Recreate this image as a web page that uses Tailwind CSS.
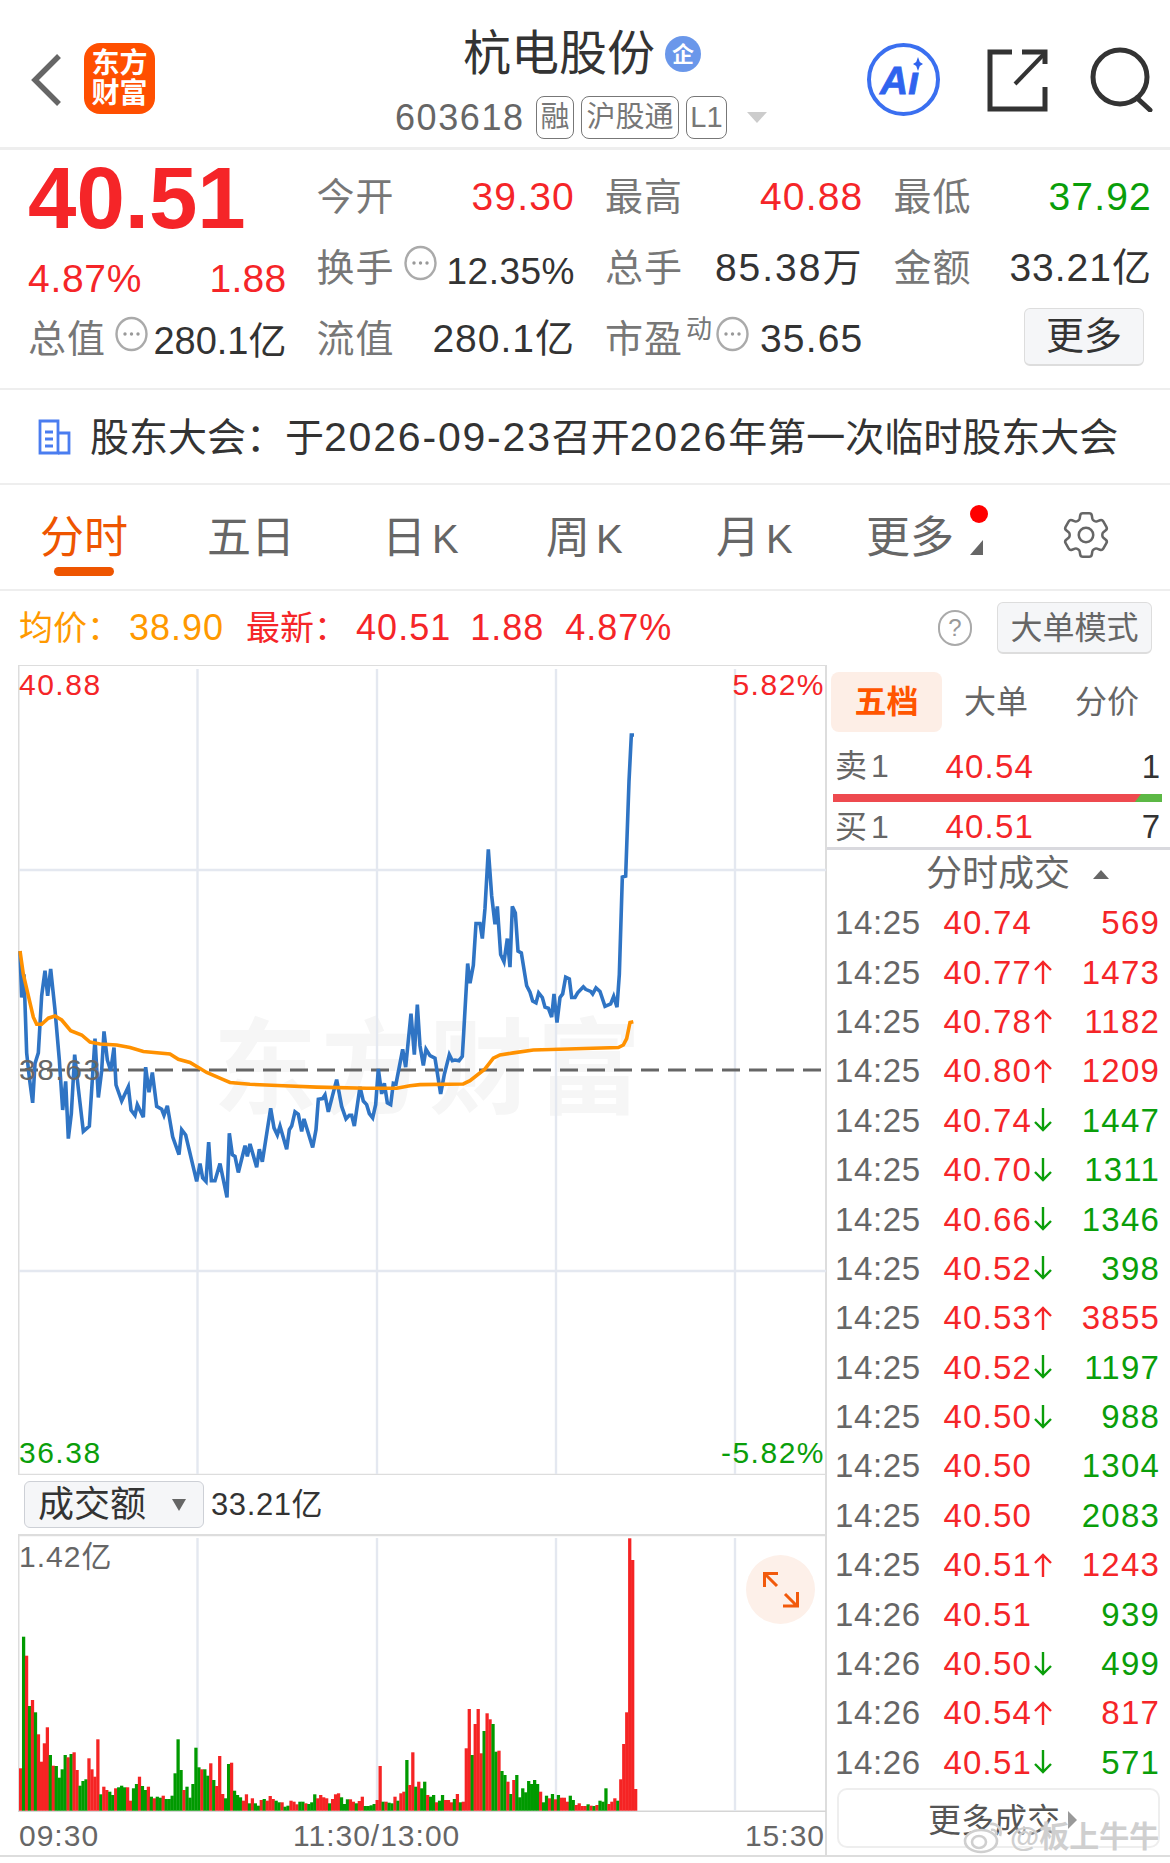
<!DOCTYPE html>
<html lang="zh-CN">
<head>
    <meta charset="UTF-8">
    <title>杭电股份</title>
    <script src="https://cdn.jsdelivr.net/npm/@tailwindcss/browser@4"></script>
</head>
<body class="bg-white w-[1170px] h-[1863px] overflow-hidden relative font-['Liberation_Sans','Noto_Sans_CJK_SC',sans-serif] text-[#333]">

    <!-- Header -->
    <header class="h-[150px] border-b-[3px] border-[#eeeeee] relative flex">
        <div class="w-[84px] pl-[31px] pt-[54px] shrink-0">
            <svg width="32" height="52" viewBox="0 0 32 52" fill="none" stroke="#666" stroke-width="5.5"><path d="M28 2 L4 26 L28 50"/></svg>
        </div>
        <div class="mt-[43px] w-[71px] h-[71px] rounded-[16px] bg-[#ff4f00] text-white font-bold text-[28px] leading-[30px] flex flex-col items-center justify-center shrink-0">
            <span>东方</span><span>财富</span>
        </div>
        <div class="absolute left-[395px] top-[27px] flex flex-col">
            <div class="flex items-center pl-[68px] h-[54px]">
                <span class="text-[48px] leading-none">杭电股份</span>
                <span class="ml-[10px] w-[36px] h-[36px] rounded-full bg-[#6a97ea] text-white text-[22px] font-bold flex items-center justify-center">企</span>
            </div>
            <div class="flex items-center mt-[15px] text-[#666]">
                <span class="text-[36px] tracking-[1.6px] leading-none w-[141px]">603618</span>
                <span class="h-[43px] w-[38px] border-[1.5px] border-[#777] rounded-[8px] text-[29px] text-[#777] flex items-center justify-center">融</span>
                <span class="ml-[7px] h-[43px] w-[98px] border-[1.5px] border-[#777] rounded-[8px] text-[29px] text-[#777] flex items-center justify-center whitespace-nowrap">沪股通</span>
                <span class="ml-[7px] h-[43px] w-[41px] border-[1.5px] border-[#777] rounded-[8px] text-[29px] text-[#777] flex items-center justify-center">L1</span>
                <span class="ml-[20px] w-0 h-0 border-x-[10px] border-x-transparent border-t-[11px] border-t-[#cccccc]"></span>
            </div>
        </div>
        <div class="absolute left-[866px] top-[42px]">
            <svg width="75" height="75" viewBox="0 0 75 75" fill="none">
                <circle cx="37.5" cy="37.5" r="34.5" stroke="#3a6ff0" stroke-width="4"/>
                <text x="14" y="52" font-family="Liberation Sans" font-weight="700" font-style="italic" font-size="39" fill="#2f63ee" stroke="#2f63ee" stroke-width="0.8">Aı</text>
                <path d="M52 15 L53.8 20 L57 22 L53.8 24 L52 29 L50.2 24 L47 22 L50.2 20 Z" fill="#2f63ee"/>
            </svg>
        </div>
        <div class="absolute left-[986px] top-[48px]">
            <svg width="64" height="66" viewBox="986 48 64 66" fill="none" stroke="#333" stroke-width="5">
                <path d="M1012 52 H990 V109 H1045 V87"/>
                <path d="M1022 52 H1045 V64"/>
                <path d="M1015 84 L1044 54" stroke-width="4"/>
            </svg>
        </div>
        <div class="absolute left-[1090px] top-[46px]">
            <svg width="66" height="66" viewBox="1090 46 66 66" fill="none" stroke="#333" stroke-width="5">
                <circle cx="1120" cy="77" r="27"/>
                <path d="M1137 98 L1150 110" stroke-linecap="round"/>
            </svg>
        </div>
    </header>

    <!-- Quote -->
    <section class="h-[240px] border-b-2 border-[#eeeeee] pt-[12px] pl-[28px] pr-[18px] grid grid-cols-4 gap-x-[30px] grid-rows-[71px_71px_71px] text-[39px]">
        <div class="text-[87px] font-bold leading-none text-[#f52528] self-center">40.51</div>
        <div class="flex justify-between items-center"><span class="text-[38px] text-[#777] tracking-[1px]">今开</span><span class="text-[#f52528] tracking-[1.2px]">39.30</span></div>
        <div class="flex justify-between items-center"><span class="text-[38px] text-[#777] tracking-[1px]">最高</span><span class="text-[#f52528] tracking-[1.2px]">40.88</span></div>
        <div class="flex justify-between items-center"><span class="text-[38px] text-[#777] tracking-[1px]">最低</span><span class="text-[#0a9e0a] tracking-[1.2px]">37.92</span></div>

        <div class="flex justify-between items-center pt-[22px]"><span class="text-[#f52528] tracking-[0.7px]">4.87%</span><span class="text-[#f52528] tracking-[0.3px]">1.88</span></div>
        <div class="flex items-center"><span class="text-[38px] text-[#777] tracking-[1px]">换手</span><svg class="ml-[9px] mb-[12px]" width="33" height="36" viewBox="0 0 33 36" fill="none"><ellipse cx="16.5" cy="18" rx="15" ry="16" stroke="#aaa" stroke-width="2.4"/><circle cx="10" cy="18" r="1.7" fill="#999"/><circle cx="16.5" cy="18" r="1.7" fill="#999"/><circle cx="23" cy="18" r="1.7" fill="#999"/></svg><span class="ml-auto text-[37px] tracking-[0.5px] pt-[6px]">12.35%</span></div>
        <div class="flex justify-between items-center"><span class="text-[38px] text-[#777] tracking-[1px]">总手</span><span class="tracking-[2px] whitespace-nowrap">85.38万</span></div>
        <div class="flex justify-between items-center"><span class="text-[38px] text-[#777] tracking-[1px]">金额</span><span class="tracking-[1px] whitespace-nowrap">33.21亿</span></div>

        <div class="flex items-center"><span class="text-[38px] text-[#777] tracking-[1px]">总值</span><svg class="ml-[9px] mb-[12px]" width="33" height="36" viewBox="0 0 33 36" fill="none"><ellipse cx="16.5" cy="18" rx="15" ry="16" stroke="#aaa" stroke-width="2.4"/><circle cx="10" cy="18" r="1.7" fill="#999"/><circle cx="16.5" cy="18" r="1.7" fill="#999"/><circle cx="23" cy="18" r="1.7" fill="#999"/></svg><span class="ml-auto text-[38px] pt-[4px] whitespace-nowrap">280.1亿</span></div>
        <div class="flex justify-between items-center"><span class="text-[38px] text-[#777] tracking-[1px]">流值</span><span class="tracking-[1px] whitespace-nowrap">280.1亿</span></div>
        <div class="flex items-center"><span class="text-[38px] text-[#777] tracking-[1px]">市盈</span><span class="text-[#777] text-[26px] mb-[20px] ml-[3px]">动</span><svg class="ml-[4px] mb-[12px]" width="33" height="36" viewBox="0 0 33 36" fill="none"><ellipse cx="16.5" cy="18" rx="15" ry="16" stroke="#aaa" stroke-width="2.4"/><circle cx="10" cy="18" r="1.7" fill="#999"/><circle cx="16.5" cy="18" r="1.7" fill="#999"/><circle cx="23" cy="18" r="1.7" fill="#999"/></svg><span class="ml-auto tracking-[1.2px]">35.65</span></div>
        <div class="flex justify-end items-center"><span class="w-[120px] h-[58px] mr-[8px] mt-[-5px] rounded-[6px] bg-[#f5f6f8] border border-[#dddddd] border-b-2 flex items-center justify-center text-[38px]">更多</span></div>
    </section>

    <!-- Notice -->
    <section class="h-[95px] border-b-2 border-[#eeeeee] flex items-center pl-[38px]">
        <svg width="33" height="36" viewBox="0 0 33 36" fill="none" stroke="#4a7df0" stroke-width="2.8">
            <path d="M2 2 H20 V34 H2 Z"/><path d="M20 14 H31 V34 H20"/><path d="M7 13 H15 M7 20 H15 M7 27 H15"/>
        </svg>
        <span class="ml-[19px] pt-[2px] text-[39px] leading-none whitespace-nowrap">股东大会：于<span class="text-[41px] tracking-[1.8px]">2026-09-23</span>召开<span class="text-[41px] tracking-[1.8px]">2026</span>年第一次临时股东大会</span>
    </section>

    <!-- Tabs -->
    <nav class="h-[106px] border-b-2 border-[#eeeeee] relative text-[44px] text-[#666] leading-none">
        <span class="absolute left-[40px] top-[31px] text-[#ee5500]">分时</span>
        <span class="absolute left-[54px] top-[82px] w-[60px] h-[9px] rounded-full bg-[#ee5500]"></span>
        <span class="absolute left-[207px] top-[31px]">五日</span>
        <span class="absolute left-[382px] top-[31px] whitespace-nowrap">日<span class="ml-[6px] text-[40px]">K</span></span>
        <span class="absolute left-[546px] top-[31px] whitespace-nowrap">周<span class="ml-[6px] text-[40px]">K</span></span>
        <span class="absolute left-[716px] top-[31px] whitespace-nowrap">月<span class="ml-[6px] text-[40px]">K</span></span>
        <span class="absolute left-[866px] top-[31px]">更多</span>
        <span class="absolute left-[970px] top-[20px] w-[18px] h-[18px] rounded-full bg-[#ff0000]"></span>
        <svg class="absolute left-[970px] top-[55px]" width="13" height="15" viewBox="0 0 13 15"><path d="M13 0 V15 H0 Z" fill="#666"/></svg>
        <svg class="absolute left-[1057px] top-[21px]" width="58" height="58" viewBox="0 0 24 24" fill="none" stroke="#666" stroke-width="1.05"><path d="M9.594 3.94c.09-.542.56-.94 1.11-.94h2.593c.55 0 1.02.398 1.11.94l.213 1.281c.063.374.313.686.645.87.074.04.147.083.22.127.325.196.72.257 1.075.124l1.217-.456a1.125 1.125 0 0 1 1.37.49l1.296 2.247a1.125 1.125 0 0 1-.26 1.431l-1.003.827c-.293.241-.438.613-.43.992a7.723 7.723 0 0 1 0 .255c-.008.378.137.75.43.991l1.004.827c.424.35.534.955.26 1.43l-1.298 2.247a1.125 1.125 0 0 1-1.369.491l-1.217-.456c-.355-.133-.75-.072-1.076.124a6.47 6.47 0 0 1-.22.128c-.331.183-.581.495-.644.869l-.213 1.281c-.09.543-.56.94-1.11.94h-2.594c-.55 0-1.019-.398-1.11-.94l-.213-1.281c-.062-.374-.312-.686-.644-.87a6.52 6.52 0 0 1-.22-.127c-.325-.196-.72-.257-1.076-.124l-1.217.456a1.125 1.125 0 0 1-1.369-.49l-1.297-2.247a1.125 1.125 0 0 1 .26-1.431l1.004-.827c.292-.24.437-.613.43-.991a6.932 6.932 0 0 1 0-.255c.007-.38-.138-.751-.43-.992l-1.004-.827a1.125 1.125 0 0 1-.26-1.43l1.297-2.247a1.125 1.125 0 0 1 1.37-.491l1.216.456c.356.133.751.072 1.076-.124.072-.044.146-.086.22-.128.332-.183.582-.495.644-.869l.214-1.28Z"/><circle cx="12" cy="12" r="3"/></svg>
    </nav>

    <!-- Latest line -->
    <section class="h-[74px] flex items-center pl-[19px] pr-[18px] text-[34px] leading-none">
        <span class="text-[#ff9900]">均价：</span>
        <span class="text-[#ff9900] text-[36px] ml-[8px] tracking-[1px]">38.90</span>
        <span class="text-[#f52528] ml-[22px]">最新：</span>
        <span class="text-[#f52528] text-[36px] ml-[8px] tracking-[1px]">40.51</span>
        <span class="text-[#f52528] text-[36px] ml-[19px] tracking-[1px]">1.88</span>
        <span class="text-[#f52528] text-[36px] ml-[21px] tracking-[1px]">4.87%</span>
        <span class="ml-auto w-[34px] h-[36px] rounded-full border-2 border-[#aaaaaa] text-[#999] text-[24px] flex items-center justify-center">?</span>
        <span class="ml-[25px] w-[155px] h-[52px] rounded-[6px] bg-[#f5f6f8] border border-[#dddddd] border-b-2 flex items-center justify-center text-[32px] text-[#666] whitespace-nowrap">大单模式</span>
    </section>

    <!-- Main -->
    <main class="flex h-[1192px] border-b-2 border-[#dddddd]">
        <div class="w-[827px] shrink-0 border-r-2 border-[#dddddd]">
            <!-- Price plot -->
            <div class="ml-[18px] h-[810px] relative text-[30px] leading-none tracking-[1.5px]">
                <svg id="price-chart" class="absolute inset-0" width="808" height="810" viewBox="18 665 808 810" fill="none"></svg>
                <span class="absolute left-[1px] top-[5px] text-[#f52528]">40.88</span>
                <span class="absolute right-[0px] top-[5px] text-[#f52528]">5.82%</span>
                <span class="absolute left-[1px] top-[390px] text-[#666]">38.63</span>
                <span class="absolute left-[1px] top-[773px] text-[#0a9e0a]">36.38</span>
                <span class="absolute right-[0px] top-[773px] text-[#0a9e0a]">-5.82%</span>
            </div>
            <!-- Volume header -->
            <div class="h-[59px] flex items-center pl-[24px]">
                <div class="w-[180px] h-[47px] rounded-[6px] bg-[#f5f6f8] border border-[#cdd0d6] flex items-center pl-[13px] text-[36px] leading-none">
                    成交额
                    <span class="ml-[26px] w-0 h-0 border-x-[7px] border-x-transparent border-t-[12px] border-t-[#666666]"></span>
                </div>
                <span class="ml-[7px] text-[31px] tracking-[0.6px] pt-[2px]">33.21亿</span>
            </div>
            <!-- Volume plot -->
            <div class="ml-[18px] h-[278px] relative">
                <svg id="volume-chart" class="absolute inset-0" width="808" height="278" viewBox="18 1534 808 278" fill="none"></svg>
                <span class="absolute left-[1px] top-[8px] text-[30px] leading-none text-[#666] tracking-[1px]">1.42亿</span>
                <div class="absolute left-[728px] top-[21px] w-[69px] h-[69px] rounded-full bg-[#fdf0e9] flex items-center justify-center">
                    <svg width="36" height="36" viewBox="0 0 36 36" fill="none" stroke="#f25a0c" stroke-width="3"><path d="M1.5 15 V1.5 H15 M2 2 L14 14"/><path d="M34.5 20 V34 H20 M34 34 L22 22"/></svg>
                </div>
            </div>
            <!-- Time axis -->
            <div class="h-[45px] relative text-[30px] leading-none text-[#666] tracking-[1px]">
                <span class="absolute left-[19px] top-[9px]">09:30</span>
                <span class="absolute left-[293px] top-[9px]">11:30/13:00</span>
                <span class="absolute right-[0px] top-[9px]">15:30</span>
            </div>
        </div>

        <!-- Right panel -->
        <div class="flex-1 flex flex-col">
            <div class="flex items-center h-[60px] mt-[7px] pl-[4px] text-[32px] leading-none text-[#666]">
                <span class="w-[111px] h-[60px] rounded-[8px] bg-[#fdeee6] text-[#ff5500] font-bold flex items-center justify-center">五档</span>
                <span class="ml-[22px]">大单</span>
                <span class="ml-[47px]">分价</span>
            </div>
            <div class="h-[62px] pl-[8px] pr-[10px] pt-[6px] flex items-center text-[33px] leading-none">
                <span class="w-[56px] text-[#666] whitespace-nowrap text-[32px]">卖<span class="ml-[4px]">1</span></span>
                <span class="w-[143px] text-right text-[#f52528] tracking-[1.2px]">40.54</span>
                <span class="ml-auto">1</span>
            </div>
            <div class="relative h-[8px] ml-[6px] mr-[8px] bg-[#5cb845] overflow-hidden">
                <div class="absolute inset-y-0 left-0 w-[308px] bg-[#ee4a4f] [clip-path:polygon(0_0,100%_0,98%_100%,0_100%)]"></div>
            </div>
            <div class="h-[45px] pl-[8px] pr-[10px] pt-[4px] flex items-center text-[33px] leading-none">
                <span class="w-[56px] text-[#666] whitespace-nowrap text-[32px]">买<span class="ml-[4px]">1</span></span>
                <span class="w-[143px] text-right text-[#f52528] tracking-[1.2px]">40.51</span>
                <span class="ml-auto">7</span>
            </div>
            <div class="h-[51px] border-t-[3px] border-[#d9d9de] flex items-center pl-[99px] text-[36px] leading-none text-[#666]">
                分时成交
                <span class="ml-[23px] w-0 h-0 border-x-[8px] border-x-transparent border-b-[9px] border-b-[#666666]"></span>
            </div>
            <div id="trades"></div>
            <div class="mt-[1px] mx-[10px] h-[60px] rounded-[10px] border-2 border-[#eeeeee] flex items-center justify-center text-[33px] leading-none text-[#555] pt-[4px] pl-[8px]">
                更多成交
                <span class="ml-[8px] w-0 h-0 border-y-[9px] border-y-transparent border-l-[9px] border-l-[#999999]"></span>
            </div>
        </div>
    </main>

    <!-- Chart watermark -->
    <div class="absolute left-[213px] top-[1018px] text-[104px] leading-none font-bold text-[#f6f6f6] tracking-[4px] whitespace-nowrap -z-10">东方财富</div>

    <!-- Weibo watermark -->
    <div class="absolute left-[962px] top-[1819px] flex items-center [text-shadow:0_0_3px_#ffffff]">
        <svg width="44" height="36" viewBox="0 0 44 36" fill="none" stroke="#cfcfcf" stroke-width="2.6">
            <ellipse cx="19" cy="22" rx="16" ry="11" fill="#ffffff"/>
            <ellipse cx="17" cy="23" rx="7" ry="6"/>
            <path d="M28 5 C36 4 40 11 38 17 M29 11 C33 10 35 13 34 16"/>
        </svg>
        <span class="ml-[4px] text-[30px] leading-none font-bold text-[#cfcfcf] whitespace-nowrap">@板上牛牛</span>
    </div>

    <script>
        // points read off the chart as [x, y] in crop units, then mapped to page coordinates
        const blueA = [[60,815],[65,945],[72,880],[80,1100],[88,1170],[98,1240],[105,1130],[115,1100],[125,940],[135,870],[143,940],[152,865],[165,980],[178,1120],[188,1260],[197,1180],[205,1340],[214,1270],[224,1105],[235,1200],[250,1320],[268,1305],[285,1060],[295,1225],[305,1150],[312,1040],[322,1120],[332,1150],[342,1085],[348,1190],[365,1235],[385,1195],[393,1260],[405,1275],[412,1245],[430,1280],[437,1140],[447,1210],[457,1155],[470,1250],[485,1258],[492,1275],[502,1248],[518,1335],[537,1385],[545,1315],[557,1330],[590,1460],[600,1410],[608,1450],[618,1460],[626,1350],[634,1458],[645,1458],[660,1410],[681,1505],[688,1325],[697,1385],[705,1390],[715,1435],[735,1360],[742,1390],[750,1355],[770,1420],[778,1370],[787,1405],[812,1255],[822,1310],[832,1330],[840,1305],[860,1370],[868,1315],[875,1305],[885,1265],[895,1272],[905,1320],[912,1285],[938,1365],[948,1315],[955,1230],[968,1228],[975,1218],[985,1265],[1010,1175],[1025,1250],[1038,1285],[1048,1275],[1055,1275],[1063,1305],[1080,1195],[1090,1235],[1100,1245],[1108,1270],[1118,1282],[1127,1245],[1135,1145],[1145,1215],[1153,1185],[1162,1240],[1172,1245],[1180,1185],[1188,1187],[1208,1090],[1217,1140],[1233,990],[1243,1105],[1252,965]];
        const blueB = [[60,1080],[70,1135],[78,1090],[90,1108],[105,1115],[122,1215],[133,1160],[148,1105],[157,1122],[165,1120],[177,1122],[187,1110],[203,850],[210,905],[220,855],[228,738],[240,738],[247,780],[255,695],[265,530],[275,660],[285,740],[292,690],[302,825],[312,845],[322,780],[330,860],[337,690],[346,708],[354,815],[364,820],[380,912],[390,930],[398,955],[408,960],[416,932],[427,945],[435,972],[445,975],[455,1000],[462,935],[471,1015],[480,945],[488,935],[497,888],[508,893],[515,945],[525,945],[533,932],[550,915],[557,922],[572,928],[578,935],[588,918],[600,928],[615,970],[632,963],[641,942],[651,972],[658,880],[667,608],[677,605],[687,340],[694,210],[702,210]];
        const orangeA = [[60,815],[70,880],[100,1000],[110,1020],[125,1020],[145,1003],[165,997],[185,1008],[212,1038],[245,1050],[270,1070],[300,1075],[350,1078],[390,1085],[430,1096],[510,1103],[535,1118],[570,1127],[620,1155],[670,1175],[690,1183],[750,1188],[850,1192],[950,1196],[1100,1199],[1190,1199]];
        const orangeB = [[30,1192],[60,1189],[190,1187],[210,1178],[255,1145],[280,1115],[300,1106],[340,1100],[400,1092],[655,1085],[670,1078],[680,1060],[690,1015],[700,1013]];

        const mapA = p => (p[0] / 3) + ',' + (660 + p[1] / 2.8);
        const mapB = p => (400 + p[0] / 3) + ',' + (660 + p[1] / 2.8);
        const linePoints = (a, b) => a.map(mapA).concat(b.map(mapB)).join(' ');

        const gridX = [197.5, 377, 556, 735];

        function drawPriceChart() {
            let s = '';
            s += '<path d="M18 665 H826" stroke="#dddddd" stroke-width="2"/>';
            s += '<path d="M18.75 665 V1475" stroke="#dddddd" stroke-width="1.5"/>';
            s += '<path d="M18 1474.5 H826" stroke="#dddddd" stroke-width="1.5"/>';
            gridX.forEach(x => { s += `<path d="M${x} 669 V1474" stroke="#e4e8f0" stroke-width="2.4"/>`; });
            [870, 1271].forEach(y => { s += `<path d="M19 ${y} H826" stroke="#e4e8f0" stroke-width="2.4"/>`; });
            s += '<path d="M20 1070 H822" stroke="#666666" stroke-width="3" stroke-dasharray="18 9"/>';
            s += `<polyline points="${linePoints(blueA, blueB)}" stroke="#2f74c4" stroke-width="3.6"/>`;
            s += `<polyline points="${linePoints(orangeA, orangeB)}" stroke="#ff9100" stroke-width="3.6"/>`;
            document.getElementById('price-chart').innerHTML = s;
        }

        // volume bars: r/g then top edge in crop units (baseline 1052, 3x crop)
        const bars = 'r925 g530 r587 g738 r720 g757 r823 r905 r850 r802 g885 r917 g918 g953 g928 g885 r892 g882 r877 r930 g977 g963 g958 r895 r928 r950 r838 g1003 r980 r990 g995 g1005 r985 g982 g977 g982 r982 r1022 g985 g972 r950 g978 g990 r980 g1010 r1015 g1010 g1013 r1007 g1017 g1017 g1007 g940 g838 g930 r990 g980 g1013 g972 g863 g922 r928 g928 g947 r910 g960 r978 r888 r1002 g1015 g912 r908 g992 g1005 g1012 r1022 r1003 g1030 r1015 g1030 g1037 r1020 g1017 r1022 r1008 r1017 g1022 g1027 r1027 g1040 g1037 r1022 r1025 r1033 g1025 g1025 r1030 g1032 g1027 g1003 r1015 r1005 r1012 r1015 g1030 r1017 r1003 r1000 g1012 g1032 g1018 r1018 r1025 g1030 r1023 r1010 g1038 g1038 g1036 g1032 r1020 r918 g1025 r1025 g1028 g1030 r1010 g1022 r1000 r995 g900 r975 r877 g980 r965 g985 g965 r1005 g1010 g1005 r1027 g1022 g1005 r1020 r1020 r1027 g1017 r1002 g1027 r1025 r865 r747 g885 r792 r747 r880 g813 r760 r778 g792 g875 r872 g933 g945 r965 g1002 r960 g945 g1012 g985 g997 g963 g972 g960 g972 r995 g1027 g1007 r1015 g1002 r1018 g1005 r1013 r1013 r1025 g1007 g1020 r1035 r1030 r1038 r1038 g1033 r1037 g1038 r1035 g1022 g1025 g985 r1032 r1025 r1015 g1022 r958 r852 r757 r235 r300 r987'.split(' ');

        function drawVolumeChart() {
            let s = '';
            s += '<path d="M18 1535 H826" stroke="#dddddd" stroke-width="2.5"/>';
            s += '<path d="M18.75 1534 V1812" stroke="#dddddd" stroke-width="1.5"/>';
            s += '<path d="M18 1811.5 H826" stroke="#d5d5d5" stroke-width="2"/>';
            gridX.forEach(x => { s += `<path d="M${x} 1538 V1811" stroke="#e4e8f0" stroke-width="2.4"/>`; });
            const step = (637 - 19) / bars.length;
            bars.forEach((b, i) => {
                const top = 1460 + Number(b.slice(1)) / 3;
                const fill = b[0] === 'r' ? '#f52424' : '#009a00';
                s += `<rect x="${(19 + i * step).toFixed(2)}" y="${top.toFixed(1)}" width="${(step + 0.3).toFixed(2)}" height="${(1810.7 - top).toFixed(1)}" fill="${fill}"/>`;
            });
            document.getElementById('volume-chart').innerHTML = s;
        }

        const trades = [
            ['14:25', '40.74', '', '569', 'r'], ['14:25', '40.77', 'u', '1473', 'r'], ['14:25', '40.78', 'u', '1182', 'r'],
            ['14:25', '40.80', 'u', '1209', 'r'], ['14:25', '40.74', 'd', '1447', 'g'], ['14:25', '40.70', 'd', '1311', 'g'],
            ['14:25', '40.66', 'd', '1346', 'g'], ['14:25', '40.52', 'd', '398', 'g'], ['14:25', '40.53', 'u', '3855', 'r'],
            ['14:25', '40.52', 'd', '1197', 'g'], ['14:25', '40.50', 'd', '988', 'g'], ['14:25', '40.50', '', '1304', 'g'],
            ['14:25', '40.50', '', '2083', 'g'], ['14:25', '40.51', 'u', '1243', 'r'], ['14:26', '40.51', '', '939', 'g'],
            ['14:26', '40.50', 'd', '499', 'g'], ['14:26', '40.54', 'u', '817', 'r'], ['14:26', '40.51', 'd', '571', 'g']
        ];

        const arrowUp = '<svg width="20" height="24" viewBox="0 0 20 24" fill="none" stroke="#f52528" stroke-width="2.4"><path d="M10 24 V2 M2 10 L10 2 L18 10"/></svg>';
        const arrowDown = '<svg width="20" height="24" viewBox="0 0 20 24" fill="none" stroke="#0a9e0a" stroke-width="2.4"><path d="M10 0 V22 M2 14 L10 22 L18 14"/></svg>';

        function drawTrades() {
            document.getElementById('trades').innerHTML = trades.map(t => `
                <div class="h-[49.4px] pl-[8px] pr-[10px] flex items-center text-[33px] leading-none">
                    <span class="w-[86px] text-[33px] tracking-[0.6px] text-[#666]">${t[0]}</span>
                    <span class="w-[111px] text-right text-[#f52528] tracking-[1.2px]">${t[1]}</span>
                    <span class="w-[21px] pl-[1px]">${t[2] === 'u' ? arrowUp : t[2] === 'd' ? arrowDown : ''}</span>
                    <span class="ml-auto tracking-[1.2px] ${t[4] === 'r' ? 'text-[#f52528]' : 'text-[#0a9e0a]'}">${t[3]}</span>
                </div>`).join('');
        }

        drawPriceChart();
        drawVolumeChart();
        drawTrades();
    </script>
</body>
</html>
